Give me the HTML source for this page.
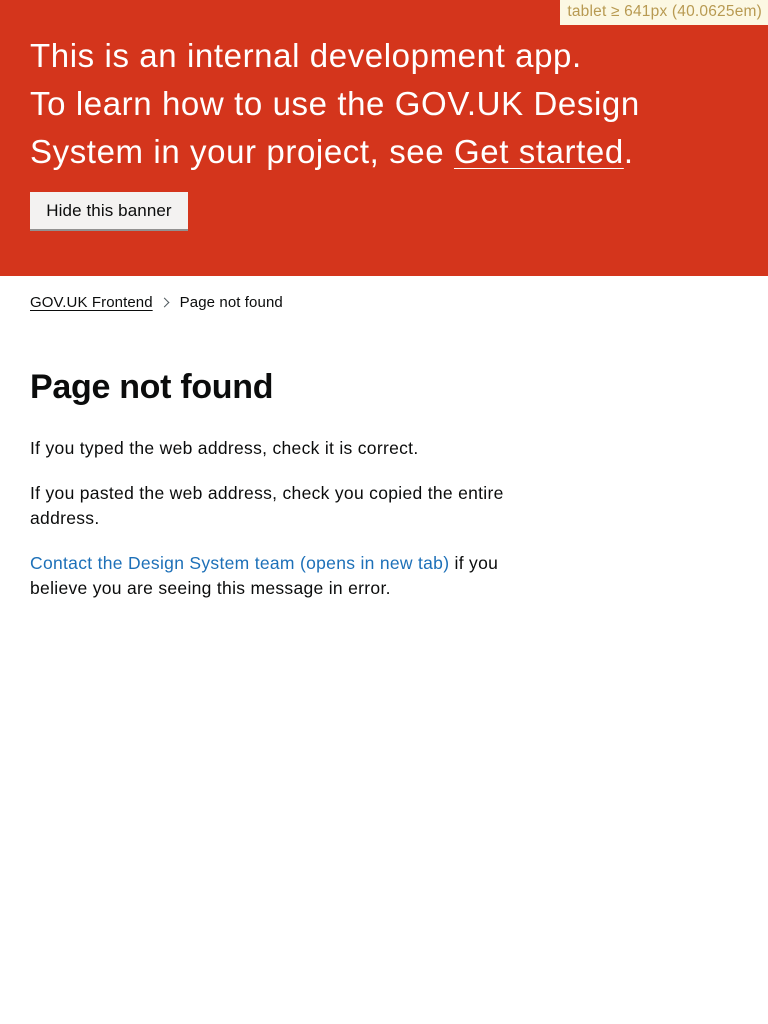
<!DOCTYPE html>
<html><head><meta charset="utf-8"><style>
body{margin:0;font-family:"Liberation Sans",Arial,sans-serif;color:#0b0c0c;background:#fff;width:768px;height:1024px;position:relative;overflow:hidden}
.banner{background:#d4351c;height:276px;position:relative;color:#fff}
.bp{position:absolute;left:30px;top:32px;font-size:33px;line-height:48px;letter-spacing:0.6px;margin:0;white-space:nowrap}
.bp a{color:#fff;text-decoration:underline;text-underline-offset:5px;text-decoration-thickness:1px}
.btn{position:absolute;left:30px;top:192px;width:158px;height:37px;background:#f3f2f1;box-shadow:0 2px 0 #929191;color:#0b0c0c;font-size:17px;line-height:38px;text-align:center;letter-spacing:0.1px}
.tag{position:absolute;right:0;top:0;background:#fcf8e3;color:#b89a52;font-size:15.5px;padding:3px 6px 4px 7px;line-height:18px;letter-spacing:0.2px}
.crumb{position:absolute;left:30px;top:294px;font-size:15px;letter-spacing:0.1px}
.crumb a{color:#0b0c0c;text-decoration:underline;text-underline-offset:3px}
.chev{display:inline-block;width:6px;height:6px;border-top:1px solid #505a5f;border-right:1px solid #505a5f;transform:rotate(45deg);margin:0 12px 1px 8px}
h1{position:absolute;left:30px;top:366px;margin:0;font-size:34px;font-weight:bold;letter-spacing:-0.3px;line-height:42px}
.p{position:absolute;left:30px;width:510px;margin:0;font-size:17.5px;line-height:25px;letter-spacing:0.3px}
.p a{color:#1d70b8;text-underline-offset:3px;text-decoration-thickness:1px}
</style></head><body>
<div class="banner">
<div class="tag">tablet ≥ 641px (40.0625em)</div>
<p class="bp">This is an internal development app.<br>To learn how to use the GOV.UK Design<br>System in your project, see <a>Get started</a>.</p>
<div class="btn">Hide this banner</div>
</div>
<div class="crumb"><a>GOV.UK Frontend</a><span class="chev"></span>Page not found</div>
<h1>Page not found</h1>
<p class="p" style="top:436px">If you typed the web address, check it is correct.</p>
<p class="p" style="top:481px">If you pasted the web address, check you copied the entire address.</p>
<p class="p" style="top:551px"><a>Contact the Design System team (opens in new tab)</a> if you believe you are seeing this message in error.</p>
</body></html>
